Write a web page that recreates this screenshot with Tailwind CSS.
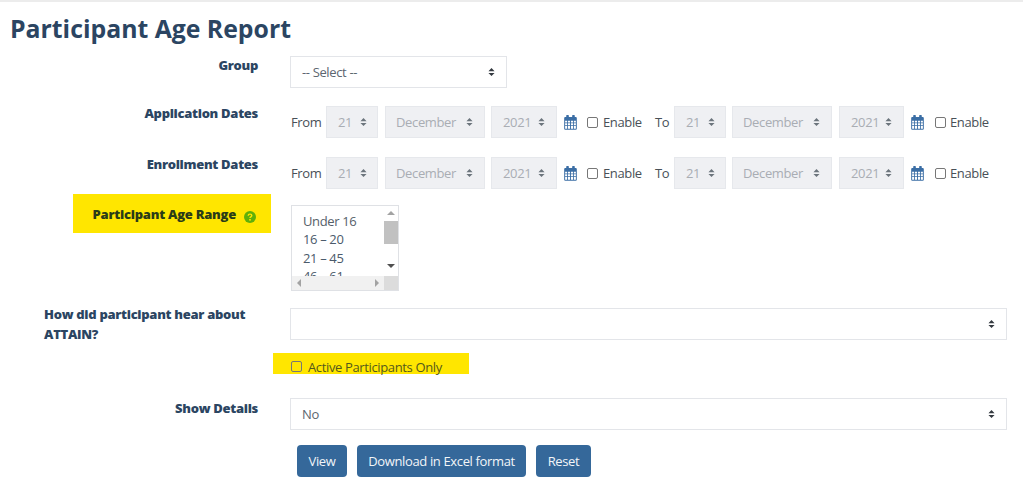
<!DOCTYPE html>
<html lang="en">
<head>
  <meta charset="UTF-8">
  <meta name="viewport" content="width=device-width, initial-scale=1.0">
  <title>Participant Age Report</title>
  <script src="https://cdn.jsdelivr.net/npm/@tailwindcss/browser@4"></script>
</head>
<body class="bg-white font-['Open_Sans',sans-serif] text-[13px] tracking-[-0.36px] leading-[20px] text-[#495057]">
  <!-- shared icons -->
  <svg class="hidden">
    <symbol id="chev" viewBox="0 0 8 10"><path d="M4 0.5 7.5 4H.5ZM4 9.5 .5 6h7Z"/></symbol>
    <symbol id="cal" viewBox="0 0 14 16">
      <path fill-rule="evenodd" d="M3 0h1.6a.6.6 0 0 1 .6.6V2h3.6V.6a.6.6 0 0 1 .6-.6H11a.6.6 0 0 1 .6.6V2h1a1.2 1.2 0 0 1 1.2 1.2v11.4a1.2 1.2 0 0 1-1.2 1.2H1.4A1.2 1.2 0 0 1 .2 14.6V3.2A1.2 1.2 0 0 1 1.4 2h1V.6A.6.6 0 0 1 3 0ZM1.2 6v2h2.2V6Zm3.1 0v2h2.2V6Zm3.2 0v2h2.2V6Zm3.1 0v2h2.2V6ZM1.2 8.9v2h2.2v-2Zm3.1 0v2h2.2v-2Zm3.2 0v2h2.2v-2Zm3.1 0v2h2.2v-2ZM1.2 11.8v2.6a.4.4 0 0 0 .4.4h1.8v-3Zm3.1 0v3h2.2v-3Zm3.2 0v3h2.2v-3Zm3.1 0v3h1.8a.4.4 0 0 0 .4-.4v-2.6Z"/>
    </symbol>
  </svg>

  <div class="border-t-2 border-[#ececec] h-[500px] overflow-hidden">
    <h1 class="ml-[10px] mt-[8px] h-[36px] text-[24.8px] tracking-normal leading-[36px] font-bold text-[#2b4562]">Participant Age Report</h1>

    <form class="mt-[10px]">
      <!-- Group -->
      <div class="flex h-[32px]">
        <label class="w-[258px] shrink-0 -mt-[1px] text-right font-extrabold tracking-[-0.3px] text-[#2b4562]">Group</label>
        <div class="relative ml-[32px] w-[217px]">
          <select class="w-full h-[32px] appearance-none bg-white border border-[#e3e5e9] pl-[11px] text-[#5c6670]"><option>-- Select --</option></select>
          <svg class="absolute right-[12px] top-[11px] w-[7px] h-[10px] fill-[#343a40] pointer-events-none"><use href="#chev"/></svg>
        </div>
      </div>

      <!-- Application Dates -->
      <div class="flex h-[32px] mt-[18px]">
        <label class="w-[258px] shrink-0 -mt-[3px] text-right font-extrabold tracking-[-0.3px] text-[#2b4562]">Application Dates</label>
        <div class="flex items-center ml-[32px]">
          <span class="w-[36px] pl-[1px]">From</span>
          <div class="relative w-[52px]">
            <select disabled class="w-full h-[32px] appearance-none bg-[#eff0f3] disabled:opacity-100 border border-[#e6e8ec] pl-[11px] text-[#a9adb3]"><option>21</option></select>
            <svg class="absolute right-[11px] top-[11px] w-[7px] h-[10px] fill-[#6c757d] pointer-events-none"><use href="#chev"/></svg>
          </div>
          <div class="relative w-[100px] ml-[7px]">
            <select disabled class="w-full h-[32px] appearance-none bg-[#eff0f3] disabled:opacity-100 border border-[#e6e8ec] pl-[10px] text-[#a9adb3]"><option>December</option></select>
            <svg class="absolute right-[12px] top-[11px] w-[7px] h-[10px] fill-[#6c757d] pointer-events-none"><use href="#chev"/></svg>
          </div>
          <div class="relative w-[66px] ml-[6px]">
            <select disabled class="w-full h-[32px] appearance-none bg-[#eff0f3] disabled:opacity-100 border border-[#e6e8ec] pl-[11px] text-[#a9adb3]"><option>2021</option></select>
            <svg class="absolute right-[12px] top-[11px] w-[7px] h-[10px] fill-[#6c757d] pointer-events-none"><use href="#chev"/></svg>
          </div>
          <svg class="w-[13px] h-[15px] ml-[7px] fill-[#3b6ea5]"><use href="#cal"/></svg>
          <input type="checkbox" class="appearance-none w-[11px] h-[11px] ml-[10px] border border-[#777] rounded-[2px] bg-white">
          <span class="ml-[5px] w-[52px]">Enable</span>
          <span class="w-[19px]">To</span>
          <div class="relative w-[52px]">
            <select disabled class="w-full h-[32px] appearance-none bg-[#eff0f3] disabled:opacity-100 border border-[#e6e8ec] pl-[11px] text-[#a9adb3]"><option>21</option></select>
            <svg class="absolute right-[11px] top-[11px] w-[7px] h-[10px] fill-[#6c757d] pointer-events-none"><use href="#chev"/></svg>
          </div>
          <div class="relative w-[100px] ml-[6px]">
            <select disabled class="w-full h-[32px] appearance-none bg-[#eff0f3] disabled:opacity-100 border border-[#e6e8ec] pl-[10px] text-[#a9adb3]"><option>December</option></select>
            <svg class="absolute right-[12px] top-[11px] w-[7px] h-[10px] fill-[#6c757d] pointer-events-none"><use href="#chev"/></svg>
          </div>
          <div class="relative w-[65px] ml-[7px]">
            <select disabled class="w-full h-[32px] appearance-none bg-[#eff0f3] disabled:opacity-100 border border-[#e6e8ec] pl-[11px] text-[#a9adb3]"><option>2021</option></select>
            <svg class="absolute right-[12px] top-[11px] w-[7px] h-[10px] fill-[#6c757d] pointer-events-none"><use href="#chev"/></svg>
          </div>
          <svg class="w-[13px] h-[15px] ml-[7px] fill-[#3b6ea5]"><use href="#cal"/></svg>
          <input type="checkbox" class="appearance-none w-[11px] h-[11px] ml-[11px] border border-[#777] rounded-[2px] bg-white">
          <span class="ml-[4px]">Enable</span>
        </div>
      </div>

      <!-- Enrollment Dates -->
      <div class="flex h-[32px] mt-[19px]">
        <label class="w-[258px] shrink-0 -mt-[3px] text-right font-extrabold tracking-[-0.3px] text-[#2b4562]">Enrollment Dates</label>
        <div class="flex items-center ml-[32px]">
          <span class="w-[36px] pl-[1px]">From</span>
          <div class="relative w-[52px]">
            <select disabled class="w-full h-[32px] appearance-none bg-[#eff0f3] disabled:opacity-100 border border-[#e6e8ec] pl-[11px] text-[#a9adb3]"><option>21</option></select>
            <svg class="absolute right-[11px] top-[11px] w-[7px] h-[10px] fill-[#6c757d] pointer-events-none"><use href="#chev"/></svg>
          </div>
          <div class="relative w-[100px] ml-[7px]">
            <select disabled class="w-full h-[32px] appearance-none bg-[#eff0f3] disabled:opacity-100 border border-[#e6e8ec] pl-[10px] text-[#a9adb3]"><option>December</option></select>
            <svg class="absolute right-[12px] top-[11px] w-[7px] h-[10px] fill-[#6c757d] pointer-events-none"><use href="#chev"/></svg>
          </div>
          <div class="relative w-[66px] ml-[6px]">
            <select disabled class="w-full h-[32px] appearance-none bg-[#eff0f3] disabled:opacity-100 border border-[#e6e8ec] pl-[11px] text-[#a9adb3]"><option>2021</option></select>
            <svg class="absolute right-[12px] top-[11px] w-[7px] h-[10px] fill-[#6c757d] pointer-events-none"><use href="#chev"/></svg>
          </div>
          <svg class="w-[13px] h-[15px] ml-[7px] fill-[#3b6ea5]"><use href="#cal"/></svg>
          <input type="checkbox" class="appearance-none w-[11px] h-[11px] ml-[10px] border border-[#777] rounded-[2px] bg-white">
          <span class="ml-[5px] w-[52px]">Enable</span>
          <span class="w-[19px]">To</span>
          <div class="relative w-[52px]">
            <select disabled class="w-full h-[32px] appearance-none bg-[#eff0f3] disabled:opacity-100 border border-[#e6e8ec] pl-[11px] text-[#a9adb3]"><option>21</option></select>
            <svg class="absolute right-[11px] top-[11px] w-[7px] h-[10px] fill-[#6c757d] pointer-events-none"><use href="#chev"/></svg>
          </div>
          <div class="relative w-[100px] ml-[6px]">
            <select disabled class="w-full h-[32px] appearance-none bg-[#eff0f3] disabled:opacity-100 border border-[#e6e8ec] pl-[10px] text-[#a9adb3]"><option>December</option></select>
            <svg class="absolute right-[12px] top-[11px] w-[7px] h-[10px] fill-[#6c757d] pointer-events-none"><use href="#chev"/></svg>
          </div>
          <div class="relative w-[65px] ml-[7px]">
            <select disabled class="w-full h-[32px] appearance-none bg-[#eff0f3] disabled:opacity-100 border border-[#e6e8ec] pl-[11px] text-[#a9adb3]"><option>2021</option></select>
            <svg class="absolute right-[12px] top-[11px] w-[7px] h-[10px] fill-[#6c757d] pointer-events-none"><use href="#chev"/></svg>
          </div>
          <svg class="w-[13px] h-[15px] ml-[7px] fill-[#3b6ea5]"><use href="#cal"/></svg>
          <input type="checkbox" class="appearance-none w-[11px] h-[11px] ml-[11px] border border-[#777] rounded-[2px] bg-white">
          <span class="ml-[4px]">Enable</span>
        </div>
      </div>

      <!-- Participant Age Range -->
      <div class="flex h-[97px] mt-[5px]">
        <div class="flex items-center justify-end ml-[73px] w-[198px] h-[39px] pr-[15px] bg-[#ffe600] shrink-0">
          <label class="font-extrabold tracking-[-0.25px] text-[#2a3c18]">Participant Age Range</label>
          <svg class="w-[12px] h-[12px] ml-[8px] mt-[6px]" viewBox="0 0 12 12">
            <circle cx="6" cy="6" r="6" fill="#5fb00a"/>
            <path d="M4.2 4.7c0-1 .8-1.6 1.8-1.6s1.8.6 1.8 1.5c0 1.3-1.8 1.2-1.8 2.4" fill="none" stroke="#ffe600" stroke-width="1.4"/>
            <rect x="5.2" y="8" width="1.6" height="1.6" fill="#ffe600"/>
          </svg>
        </div>
        <div class="flex ml-[20px] mt-[11px] w-[108px] h-[86px] border border-[#dfe1e5] bg-white">
          <div class="flex flex-col w-[92px]">
            <div class="h-[70px] overflow-hidden pl-[11px] pt-[6px] leading-[18.3px] text-[#4b5a6b]">
              <div class="text-[#566069]">Under 16</div>
              <div>16 – 20</div>
              <div>21 – 45</div>
              <div>46 – 61</div>
            </div>
            <div class="flex items-center justify-between h-[14px] px-[5px] bg-[#f1f1f1]">
              <span class="w-0 h-0 border-y-[4px] border-y-transparent border-r-[4px] border-r-[#a3a3a3]"></span>
              <span class="w-0 h-0 border-y-[4px] border-y-transparent border-l-[4px] border-l-[#a3a3a3]"></span>
            </div>
          </div>
          <div class="flex flex-col w-[14px]">
            <div class="flex flex-col items-center h-[70px]">
              <span class="mt-[5px] w-0 h-0 border-x-[4px] border-x-transparent border-b-[4px] border-b-[#a3a3a3]"></span>
              <span class="mt-[6px] w-full h-[23px] bg-[#c1c1c1]"></span>
              <span class="mt-[20px] w-0 h-0 border-x-[4px] border-x-transparent border-t-[4px] border-t-[#505050]"></span>
            </div>
            <div class="h-[14px] bg-[#dcdcdc]"></div>
          </div>
        </div>
      </div>

      <!-- How did participant hear -->
      <div class="flex h-[32px] mt-[17px]">
        <label class="ml-[44px] w-[214px] shrink-0 -mt-[4px] font-extrabold tracking-[-0.3px] text-[#2b4562]">How did participant hear about ATTAIN?</label>
        <div class="relative ml-[32px] w-[717px]">
          <select class="w-full h-[32px] appearance-none bg-white border border-[#e3e5e9]"><option></option></select>
          <svg class="absolute right-[12px] top-[11px] w-[7px] h-[10px] fill-[#343a40] pointer-events-none"><use href="#chev"/></svg>
        </div>
      </div>

      <!-- Active only -->
      <div class="flex items-end ml-[273px] mt-[13px] w-[196px] h-[21px] pl-[18px] bg-[#ffe600]">
        <input type="checkbox" id="active" class="appearance-none w-[11px] h-[11px] mb-[2px] border border-[#777] rounded-[2px] bg-transparent">
        <label for="active" class="ml-[6px] text-[#54591c] leading-[14px]">Active Participants Only</label>
      </div>

      <!-- Show Details -->
      <div class="flex h-[32px] mt-[24px]">
        <label class="w-[258px] shrink-0 text-right font-extrabold tracking-[-0.3px] text-[#2b4562]">Show Details</label>
        <div class="relative ml-[32px] w-[717px]">
          <select class="w-full h-[32px] appearance-none bg-white border border-[#e3e5e9] pl-[11px] text-[#5c6670]"><option>No</option></select>
          <svg class="absolute right-[12px] top-[11px] w-[7px] h-[10px] fill-[#343a40] pointer-events-none"><use href="#chev"/></svg>
        </div>
      </div>

      <!-- Buttons -->
      <div class="flex gap-[10px] ml-[297px] mt-[15px]">
        <button type="button" class="w-[50px] h-[32px] rounded-[4px] bg-[#35689a] text-[#f2f5f8]">View</button>
        <button type="button" class="w-[169px] h-[32px] rounded-[4px] bg-[#35689a] text-[#f2f5f8]">Download in Excel format</button>
        <button type="button" class="w-[55px] h-[32px] rounded-[4px] bg-[#35689a] text-[#f2f5f8]">Reset</button>
      </div>
    </form>
  </div>
</body>
</html>
